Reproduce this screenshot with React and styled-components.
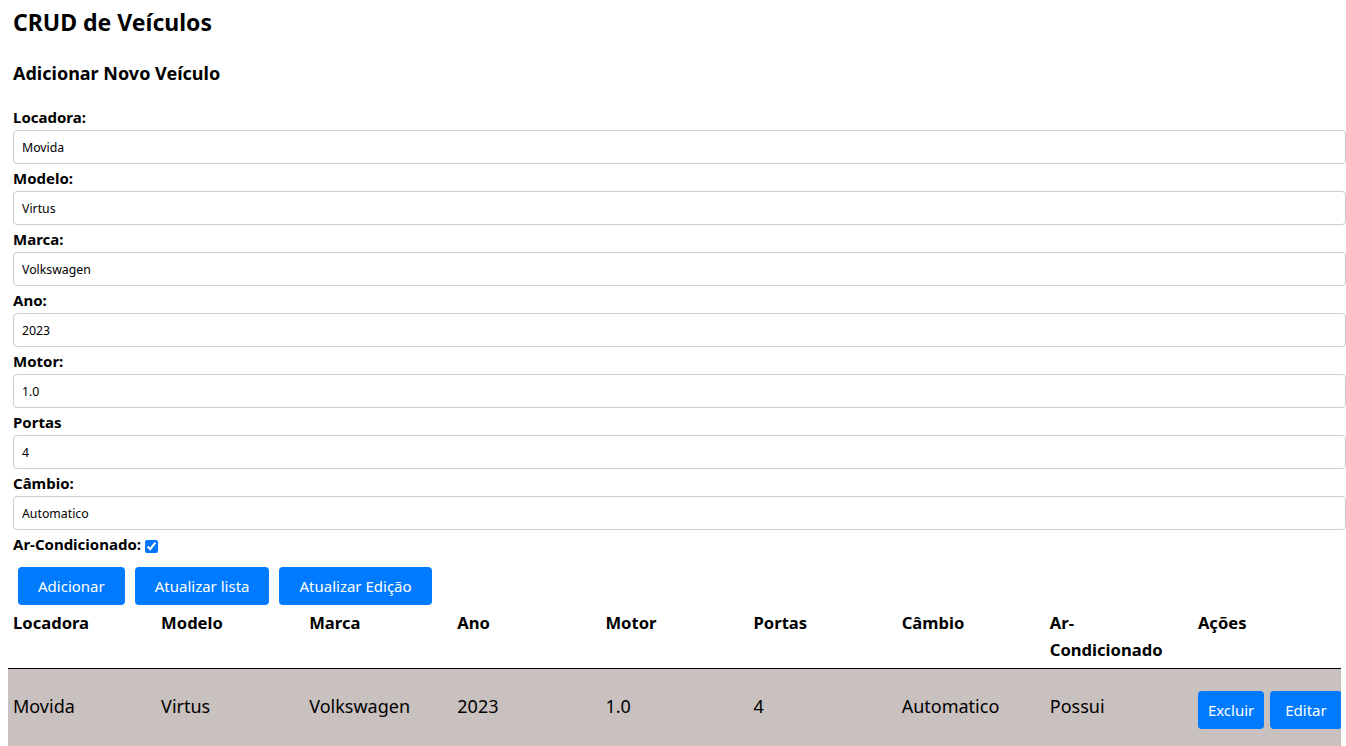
import React, { useState } from "react";
import styled, { createGlobalStyle } from "styled-components";

const GlobalStyle = createGlobalStyle`
  html, body {
    margin: 0;
    overflow: hidden;
    background: #ffffff;
  }
  body {
    font-family: "Noto Sans", "Open Sans", sans-serif;
    color: #000000;
  }
`;

const Page = styled.div`
  padding: 8px;
`;

const Section = styled.div`
  padding-left: 5px;
`;

const Title = styled.h1`
  margin: 0;
  font-size: 23px;
  line-height: 28px;
  font-weight: 700;
`;

const Subtitle = styled.h2`
  margin: 25px 0 0;
  font-size: 18px;
  line-height: 24px;
  font-weight: 700;
`;

const Form = styled.form`
  margin-top: 22px;
`;

const Label = styled.label`
  display: block;
  font-size: 15px;
  line-height: 20px;
  font-weight: 700;
  margin-bottom: 3px;
`;

const Input = styled.input`
  display: block;
  box-sizing: border-box;
  width: calc(100% + 8px);
  height: 34px;
  margin: 0 0 4px;
  padding: 0 8px;
  border: 1px solid #cccccc;
  border-radius: 4px;
  font-family: "Noto Sans", sans-serif;
  font-size: 12.3px;
  color: #000000;
  background: #ffffff;
  outline: none;
`;

const CheckRow = styled.label`
  display: flex;
  align-items: flex-start;
  font-size: 15px;
  line-height: 20px;
  font-weight: 700;
  height: 20px;
`;

const Check = styled.input`
  width: 13px;
  height: 13px;
  margin: 6px 0 0 4px;
  accent-color: #0075ff;
`;

const ButtonRow = styled.div`
  display: flex;
  gap: 10px;
  margin-top: 13px;
  padding-left: 10px;
`;

const Button = styled.button`
  flex: none;
  background: #007bff;
  color: #ffffff;
  border: none;
  border-radius: 4px;
  padding: 10px ${(p) => p.$pad || "20px"};
  height: 38px;
  font-family: "Noto Sans", sans-serif;
  font-size: 15px;
  line-height: 18px;
  cursor: pointer;
  white-space: nowrap;
`;

const Table = styled.table`
  width: 1333px;
  table-layout: fixed;
  border-collapse: collapse;
`;

const Th = styled.th`
  text-align: left;
  vertical-align: top;
  padding: 4px 5px 5px;
  font-size: 16.6px;
  line-height: 27px;
  font-weight: 700;
  border-bottom: 1px solid #000000;
`;

const HeadText = styled.span`
  display: inline-block;
  width: ${(p) => (p.$wrap ? "min-content" : "auto")};
`;

const Row = styled.tr`
  background: #c8c1bf;
`;

const Td = styled.td`
  padding: ${(p) => (p.$actions ? "22px 5px 20px" : "19px 5px 25px")};
  font-size: 18px;
  line-height: 24px;
  vertical-align: middle;
  white-space: nowrap;
  overflow: hidden;
`;

const Actions = styled.div`
  display: flex;
  gap: 6px;
`;

const fields = [
  { label: "Locadora:", value: "Movida" },
  { label: "Modelo:", value: "Virtus" },
  { label: "Marca:", value: "Volkswagen" },
  { label: "Ano:", value: "2023" },
  { label: "Motor:", value: "1.0" },
  { label: "Portas", value: "4" },
  { label: "Câmbio:", value: "Automatico" },
];

const columns = [
  "Locadora",
  "Modelo",
  "Marca",
  "Ano",
  "Motor",
  "Portas",
  "Câmbio",
  "Ar-Condicionado",
  "Ações",
];

const vehicles = [
  {
    locadora: "Movida",
    modelo: "Virtus",
    marca: "Volkswagen",
    ano: "2023",
    motor: "1.0",
    portas: "4",
    cambio: "Automatico",
    ar: true,
  },
];

export default function App() {
  const [values, setValues] = useState(fields.map((f) => f.value));
  const [ar, setAr] = useState(true);

  return (
    <Page>
      <GlobalStyle />
      <Section>
        <Title>CRUD de Veículos</Title>
        <Subtitle>Adicionar Novo Veículo</Subtitle>
        <Form onSubmit={(e) => e.preventDefault()}>
          {fields.map((f, i) => (
            <div key={f.label}>
              <Label>{f.label}</Label>
              <Input
                value={values[i]}
                onChange={(e) => {
                  const next = [...values];
                  next[i] = e.target.value;
                  setValues(next);
                }}
              />
            </div>
          ))}
          <CheckRow>
            Ar-Condicionado:
            <Check
              type="checkbox"
              checked={ar}
              onChange={(e) => setAr(e.target.checked)}
            />
          </CheckRow>
        </Form>
      </Section>
      <ButtonRow>
        <Button>Adicionar</Button>
        <Button>Atualizar lista</Button>
        <Button>Atualizar Edição</Button>
      </ButtonRow>
      <Table>
        <thead>
          <tr>
            {columns.map((c) => (
              <Th key={c}>
                <HeadText $wrap={c.includes("-")}>{c}</HeadText>
              </Th>
            ))}
          </tr>
        </thead>
        <tbody>
          {vehicles.map((v) => (
            <Row key={v.modelo}>
              <Td>{v.locadora}</Td>
              <Td>{v.modelo}</Td>
              <Td>{v.marca}</Td>
              <Td>{v.ano}</Td>
              <Td>{v.motor}</Td>
              <Td>{v.portas}</Td>
              <Td>{v.cambio}</Td>
              <Td>{v.ar ? "Possui" : "Não possui"}</Td>
              <Td $actions>
                <Actions>
                  <Button $pad="10px">Excluir</Button>
                  <Button $pad="15px">Editar</Button>
                </Actions>
              </Td>
            </Row>
          ))}
        </tbody>
      </Table>
    </Page>
  );
}
